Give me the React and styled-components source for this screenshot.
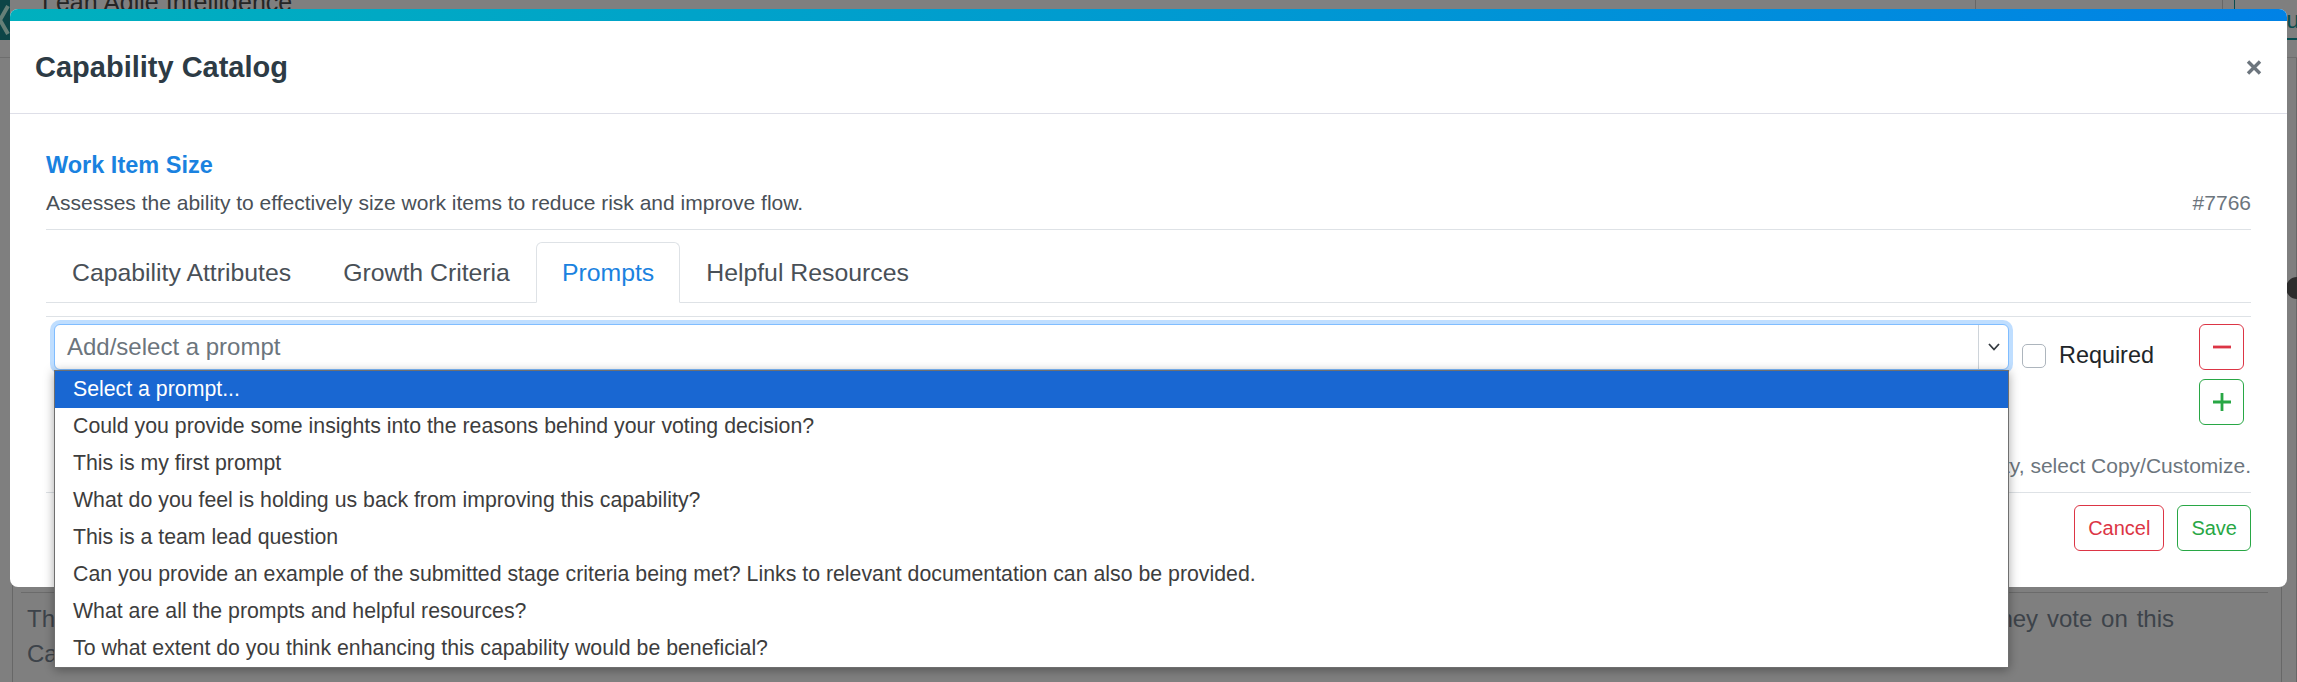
import React from 'react';
import styled, { createGlobalStyle } from 'styled-components';

const GlobalStyle = createGlobalStyle`
  * {
    box-sizing: border-box;
  }
  html,
  body {
    margin: 0;
    padding: 0;
    height: 100%;
    overflow: hidden;
  }
  body {
    font-family: 'Liberation Sans', Arial, sans-serif;
    color: #212529;
    background: #fff;
  }
`;

// ---- page behind the modal ----

const Page = styled.div`
  width: 2297px;
  height: 682px;
  overflow: hidden;
  background: #fff;
`;

const NavBar = styled.header`
  height: 58px;
  display: flex;
  align-items: flex-start;
  border-bottom: 1px solid #dcdcdc;
`;

const Logo = styled.div`
  width: 40px;
  height: 40px;
  margin-left: -30px;
  flex: none;
`;

const NavTitle = styled.div`
  margin: -10px 0 0 32px;
  font-size: 25px;
  line-height: 25px;
  color: #4a4a4a;
  white-space: nowrap;
`;

const NavLinks = styled.nav`
  margin-left: auto;
  display: flex;
  height: 40px;
  margin-right: -16px;
`;

const NavItem = styled.div`
  width: ${p => p.width}px;
  border-left: 1px solid #cfcfcf;
`;

const NavLink = styled.div`
  padding: 6px 0 0 18px;
  font-size: 24px;
  color: #0f9aa0;
  border-bottom: 2px solid #0f9aa0;
  border-left: 1px solid #0f9aa0;
`;

const Main = styled.main`
  display: flex;
  padding-left: 12px;
`;

const Card = styled.section`
  flex: 1;
  margin-top: 240px;
  height: 420px;
  border: 1px solid #cfcfcf;
`;

const CardHead = styled.div`
  height: 294px;
  margin: 0 13px 0 8px;
  border-bottom: 1px solid #d6d6d6;
`;

const CardText = styled.div`
  padding: 8px 107px 0 14px;
  font-size: 24px;
  line-height: 35px;
  color: #7b8794;
`;

const JustLine = styled.div`
  text-align: justify;
  text-align-last: justify;
  white-space: nowrap;
`;

const RightRail = styled.aside`
  width: 15px;
  padding: 219px 0 0 4px;
  border-right: 1px solid #cfcfcf;
`;

const Dot = styled.div`
  width: 22px;
  height: 22px;
  border-radius: 50%;
  background: #5a5a5a;
`;

// ---- modal ----

const Overlay = styled.div`
  position: fixed;
  inset: 0;
  background: rgba(0, 0, 0, 0.5);
  padding: 9px 10px;
`;

const Modal = styled.div`
  background: #fff;
  border-radius: 8px;
`;

const TopBand = styled.div`
  height: 12px;
  border-radius: 8px 8px 0 0;
  background: linear-gradient(90deg, #00b0be 0%, #0096d4 60%, #0082e6 100%);
`;

const Header = styled.div`
  height: 93px;
  padding: 0 25px;
  display: flex;
  align-items: center;
  justify-content: space-between;
  border-bottom: 1px solid #dedfe8;
`;

const Title = styled.h4`
  margin: 0;
  font-size: 29px;
  font-weight: 700;
  color: #2d3b45;
`;

const CloseButton = styled.button`
  border: 0;
  background: none;
  padding: 0;
  display: flex;
  cursor: pointer;
`;

const Body = styled.div`
  padding: 37px 36px 36px;
`;

const ItemName = styled.h5`
  margin: 0 0 8px;
  font-size: 23.5px;
  line-height: 28px;
  font-weight: 700;
  color: #1a82e0;
`;

const MetaRow = styled.div`
  display: flex;
  justify-content: space-between;
  font-size: 21px;
  line-height: 31px;
`;

const Description = styled.div`
  color: #495057;
`;

const ItemId = styled.div`
  color: #6c757d;
`;

const Divider = styled.hr`
  margin: 11px 0 12px;
  border: 0;
  border-top: 1px solid #dee2e6;
`;

const TabNav = styled.div`
  display: flex;
  border-bottom: 1px solid #dee2e6;
`;

const Tab = styled.div`
  padding: 11px 25px;
  font-size: 24.8px;
  line-height: 37px;
  margin-bottom: -1px;
  border: 1px solid transparent;
  border-radius: 6px 6px 0 0;
  color: ${p => (p.active ? '#1a82e0' : '#495057')};
  ${p => p.active && 'background: #fff; border-color: #dee2e6 #dee2e6 #fff;'}
`;

const Pane = styled.div`
  margin-top: 13px;
  border-top: 1px solid #dee2e6;
`;

const PromptRow = styled.div`
  display: flex;
  align-items: flex-start;
  padding: 7px 7px 0 8px;
`;

const SelectWrap = styled.div`
  flex: 1;
  position: relative;
`;

const SelectBox = styled.div`
  height: 46px;
  display: flex;
  border: 1px solid #80bdff;
  border-radius: 6px;
  box-shadow: 0 0 0 4px rgba(0, 123, 255, 0.25);
  background: #fff;
`;

const Placeholder = styled.div`
  flex: 1;
  padding-left: 12px;
  font-size: 24px;
  line-height: 44px;
  color: #6c757d;
`;

const ArrowCell = styled.div`
  width: 30px;
  display: flex;
  align-items: center;
  justify-content: center;
  border-left: 1px solid #ced4da;
`;

const OptionList = styled.ul`
  position: absolute;
  top: 100%;
  left: 0;
  right: 0;
  margin: 0;
  padding: 0;
  list-style: none;
  background: #fff;
  border: 1px solid #6f6f6f;
  box-shadow: 0 2px 10px rgba(0, 0, 0, 0.35);
  z-index: 5;
`;

const Option = styled.li`
  height: 37px;
  padding-left: 18px;
  font-size: 21.3px;
  line-height: 37px;
  white-space: nowrap;
  color: ${p => (p.selected ? '#fff' : '#3d3d3d')};
  background: ${p => (p.selected ? '#1967d2' : '#fff')};
`;

const RequiredCheck = styled.label`
  flex: 0 0 177px;
  margin: 18px 0 0 13px;
  display: flex;
  align-items: center;
  gap: 13px;
  font-size: 23.4px;
  color: #212529;
`;

const Box = styled.span`
  width: 24px;
  height: 24px;
  border: 1px solid #adb5bd;
  border-radius: 5px;
  background: #fff;
`;

const ButtonColumn = styled.div`
  display: flex;
  flex-direction: column;
  gap: 9px;
`;

const IconButton = styled.button`
  width: 45px;
  height: 46px;
  padding: 0;
  display: flex;
  align-items: center;
  justify-content: center;
  background: #fff;
  border: 1px solid ${p => p.color};
  border-radius: 6px;
  color: ${p => p.color};
`;

const HelpText = styled.div`
  margin-top: 25px;
  text-align: right;
  font-size: 21px;
  line-height: 31.5px;
  color: #6c757d;
`;

const Footer = styled.div`
  margin-top: 10.5px;
  padding-top: 12px;
  border-top: 1px solid #dee2e6;
  display: flex;
  justify-content: flex-end;
  gap: 13px;
`;

const OutlineButton = styled.button`
  height: 46px;
  padding: 0 13px;
  font-family: inherit;
  font-size: 20px;
  background: #fff;
  border: 1px solid ${p => p.color};
  border-radius: 6px;
  color: ${p => p.color};
`;

const prompts = [
  'Select a prompt...',
  'Could you provide some insights into the reasons behind your voting decision?',
  'This is my first prompt',
  'What do you feel is holding us back from improving this capability?',
  'This is a team lead question',
  'Can you provide an example of the submitted stage criteria being met? Links to relevant documentation can also be provided.',
  'What are all the prompts and helpful resources?',
  'To what extent do you think enhancing this capability would be beneficial?',
];

const tabs = ['Capability Attributes', 'Growth Criteria', 'Prompts', 'Helpful Resources'];

const RED = '#dc3545';
const GREEN = '#28a745';

const App = () => (
  <>
    <GlobalStyle />
    <Page>
      <NavBar>
        <Logo>
          <svg width="40" height="40" viewBox="0 0 40 40">
            <polygon points="0,0 40,0 40,40 0,40" fill="#1a8a8f" />
            <polyline points="38,6 30,20 38,34" fill="none" stroke="#cfe" strokeWidth="4" />
          </svg>
        </Logo>
        <NavTitle>Lean Agile Intelligence</NavTitle>
        <NavLinks>
          <NavItem width={247} />
          <NavItem width={12} />
          <NavLink>Value</NavLink>
        </NavLinks>
      </NavBar>
      <Main>
        <Card>
          <CardHead />
          <CardText>
            <JustLine>
              The prompts listed below are shown to every participant during the assessment so that they can explain their rating, share their supporting evidence and raise any concerns before they vote on this
            </JustLine>
            <div>Capability. Required prompts must be answered before a vote can be submitted.</div>
          </CardText>
        </Card>
        <RightRail>
          <Dot />
        </RightRail>
      </Main>
    </Page>

    <Overlay>
      <Modal>
        <TopBand />
        <Header>
          <Title>Capability Catalog</Title>
          <CloseButton aria-label="Close">
            <svg width="16" height="15" viewBox="0 0 16 15">
              <path d="M2 1.5 L14 13.5 M14 1.5 L2 13.5" stroke="#6c757d" strokeWidth="3.4" />
            </svg>
          </CloseButton>
        </Header>
        <Body>
          <ItemName>Work Item Size</ItemName>
          <MetaRow>
            <Description>
              Assesses the ability to effectively size work items to reduce risk and improve flow.
            </Description>
            <ItemId>#7766</ItemId>
          </MetaRow>
          <Divider />
          <TabNav>
            {tabs.map(t => (
              <Tab key={t} active={t === 'Prompts'}>
                {t}
              </Tab>
            ))}
          </TabNav>
          <Pane>
            <PromptRow>
              <SelectWrap>
                <SelectBox>
                  <Placeholder>Add/select a prompt</Placeholder>
                  <ArrowCell>
                    <svg width="12" height="8" viewBox="0 0 12 8">
                      <polyline points="1,1 6,6.5 11,1" fill="none" stroke="#343a40" strokeWidth="1.8" />
                    </svg>
                  </ArrowCell>
                </SelectBox>
                <OptionList>
                  {prompts.map((p, i) => (
                    <Option key={i} selected={i === 0}>
                      {p}
                    </Option>
                  ))}
                </OptionList>
              </SelectWrap>
              <RequiredCheck>
                <Box />
                Required
              </RequiredCheck>
              <ButtonColumn>
                <IconButton color={RED} aria-label="Remove">
                  <svg width="18" height="18" viewBox="0 0 18 18">
                    <path d="M0 9 H18" stroke={RED} strokeWidth="2.8" />
                  </svg>
                </IconButton>
                <IconButton color={GREEN} aria-label="Add">
                  <svg width="18" height="18" viewBox="0 0 18 18">
                    <path d="M0 9 H18 M9 0 V18" stroke={GREEN} strokeWidth="2.8" />
                  </svg>
                </IconButton>
              </ButtonColumn>
            </PromptRow>
            <HelpText>
              This is a system capability. To modify this capability, select Copy/Customize.
            </HelpText>
          </Pane>
          <Footer>
            <OutlineButton color={RED}>Cancel</OutlineButton>
            <OutlineButton color={GREEN}>Save</OutlineButton>
          </Footer>
        </Body>
      </Modal>
    </Overlay>
  </>
);

export default App;
